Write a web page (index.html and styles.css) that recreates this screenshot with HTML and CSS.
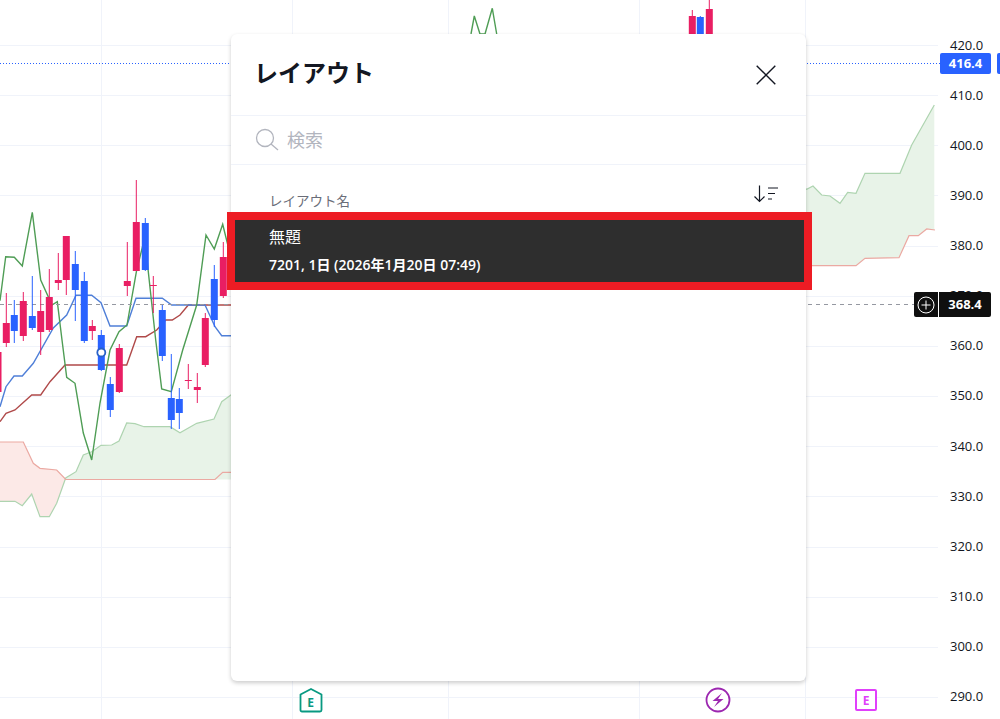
FILE: index.html
```html
<!DOCTYPE html>
<html lang="ja">
<head>
  <meta charset="UTF-8">
  <title>レイアウト</title>
  <link rel="stylesheet" href="styles.css">
</head>
<body>
  <div id="chart">
    <svg id="plot" width="1000" height="719" viewBox="0 0 1000 719">
      <g id="grid"></g>
      <path class="cloud-up" d="M66 478 76 471.7 83.3 455 91.7 451.7 101 445.3 111.7 445 119 441 126.7 423 135 423.7 144 426.7 170 426.7 180 432.7 196.7 423.3 214 419 221.7 401.7 235 392V479.5H66Z"/>
      <path class="cloud-up" d="M800 186 806.7 189.3 813 186 821.7 195 830 196 840 203.3 847.7 192.3 856 193.3 865 173.3 900 173.3 911.7 145 934.3 105V230L926.7 229 918.3 235.7 909 235.7 899 257.7 865 258.3 856 266H800Z"/>
      <path class="cloud-down" d="M0 442H23.3L33.3 463.3 40 468.3 56.7 470 65.7 478.3 56.7 503.3 49.3 516.7H40L31.7 494 22.3 505.7 15 501.3H0Z"/>
      <path class="line-span-a" d="M0 501.3H15L22.3 505.7 31.7 494 40 516.7H49.3L56.7 503.3 65.7 478 76 471.7 83.3 455 91.7 451.7 101 445.3 111.7 445 119 441 126.7 423 135 423.7 144 426.7H170L180 432.7 196.7 423.3 214 419 221.7 401.7 235 392"/>
      <path class="line-span-a" d="M800 186 806.7 189.3 813 186 821.7 195 830 196 840 203.3 847.7 192.3 856 193.3 865 173.3H900L911.7 145 934.3 105"/>
      <path class="line-span-b" d="M0 442H23.3L33.3 463.3 40 468.3 56.7 470 65.7 479.5H215L222.7 472.3H235"/>
      <path class="line-span-b" d="M800 265.7H856L865 258.3 899 257.7 909 235.7H918.3L926.7 229 935 230"/>
      <path class="line-base" d="M0 421.7 6 413.3 15 410 31.7 395H40.7L50 381.7 65 365H126.7L136.7 336.7H145.7L156.7 330 165.7 320H172.3L180 315 188.3 305H235"/>
      <path class="line-conv" d="M0 406.7 6 386.7 14 376H22.3L33.3 363.3 53.3 328 66.7 315 76 295.3H91.7L101 302.7 110 326H126.7L136 298.3H162.3L171.7 305H205L215 326.7 221.7 335.7H235"/>
      <path class="line-lag" d="M0 300.7 5.7 256.7 14.3 257.3 22.3 266 32.3 212.3 40.7 280 52 305 57.3 301.7 62 340 66.7 377.3 75 383.3 83.3 433 91.7 460 100 403 110 350 119 331.7 127 325 136.7 270 145 236.7 148 269 155.7 340 161.7 389 171.3 391.7 182.7 350 196.7 305 206 235 214.3 249 222.7 224.3 232 262"/>
      <path class="line-lag" d="M471 34 474.3 16 480 34H485L492.3 8.3 496.7 34"/>
      <path class="line-last" d="M0 63.5H940"/>
      <path class="line-cross" d="M0 304.5H914"/>
      <g id="candles"></g>
      <circle class="dot" cx="101.3" cy="352.5" r="4"/>
    </svg>

    <div class="axis">
      <span>420.0</span>
      <span>410.0</span>
      <span>400.0</span>
      <span>390.0</span>
      <span>380.0</span>
      <span>370.0</span>
      <span>360.0</span>
      <span>350.0</span>
      <span>340.0</span>
      <span>330.0</span>
      <span>320.0</span>
      <span>310.0</span>
      <span>300.0</span>
      <span>290.0</span>
    </div>

    <div class="tag tag-last">416.4</div>
    <div class="tag-edge"></div>
    <div class="tag tag-cross">
      <span class="tag-plus">
        <svg width="18" height="18" viewBox="0 0 18 18">
          <circle cx="9" cy="9" r="8" fill="none" stroke="#fff"/>
          <path d="M9 4.5v9M4.5 9h9" stroke="#fff"/>
        </svg>
      </span>
      <span class="tag-price">368.4</span>
    </div>

    <div class="pin pin-earn">
      <svg width="24" height="25" viewBox="0 0 24 25">
        <path d="M12 1 22.500 6.500V22a1.500 1.500 0 0 1-1.500 1.500H3A1.500 1.500 0 0 1 1.500 22V6.500Z" fill="#fff" stroke="#089981" stroke-width="1.800" stroke-linejoin="round"/>
      </svg>
      <span>E</span>
    </div>
    <div class="pin pin-news">
      <svg width="26" height="26" viewBox="0 0 26 26">
        <circle cx="13" cy="13" r="11.500" fill="#fff" stroke="#9c27b0" stroke-width="1.800"/>
        <path d="M17 6 7.500 14h5.500L9 20l9.500-8H13Z" fill="#9c27b0"/>
      </svg>
    </div>
    <div class="pin pin-div"><span>E</span></div>
  </div>

  <div class="dialog">
    <div class="dialog-head">
      <h1>レイアウト</h1>
      <svg class="close" width="20" height="20" viewBox="0 0 20 20">
        <path d="M.7.7l18.600 18.600M19.300.7.7 19.300" stroke="#131722" stroke-width="1.400" fill="none"/>
      </svg>
    </div>
    <div class="search">
      <svg width="24" height="24" viewBox="0 0 24 24">
        <circle cx="10" cy="10" r="8.500" fill="none" stroke="#b2b5be" stroke-width="1.300"/>
        <path d="M16 16l7 6" stroke="#b2b5be" stroke-width="1.300" fill="none"/>
      </svg>
      <span>検索</span>
    </div>
    <div class="list-head">
      <span>レイアウト名</span>
      <svg width="26" height="18" viewBox="0 0 26 18">
        <path d="M6.500 .5v16M1.500 11.500l5 5 5-5" fill="none" stroke="#131722" stroke-width="1.200"/>
        <path d="M15 3h10M15 8.500h7M15 14h4" fill="none" stroke="#131722"/>
      </svg>
    </div>
    <div class="row">
      <div class="row-name">無題</div>
      <div class="row-meta">7201, 1日 (2026年1月20日 07:49)</div>
    </div>
  </div>

  <script src="script.js"></script>
</body>
</html>
```

FILE: styles.css
```css
body {
  margin: 0;
  width: 1000px;
  height: 719px;
  overflow: hidden;
  position: relative;
  background: #fff;
  font-family: "Open Sans", "Noto Sans CJK JP", sans-serif;
  color: #131722;
}
#chart {
  width: 1000px;
  height: 719px;
}
#plot {
  display: block;
}
.grid-line {
  stroke: #f0f3fa;
  stroke-width: 1;
}
.cloud-up {
  fill: #e8f3e8;
}
.cloud-down {
  fill: #fce9e7;
}
.line-span-a,
.line-span-b,
.line-base,
.line-conv,
.line-lag,
.line-last,
.line-cross {
  fill: none;
  stroke-width: 1;
}
.line-span-a {
  stroke: #aed4b0;
  stroke-width: 1.200;
}
.line-span-b {
  stroke: #eba9a2;
  stroke-width: 1.200;
}
.line-base {
  stroke: #b04a4a;
  stroke-width: 1.400;
}
.line-conv {
  stroke: #4f7fd8;
  stroke-width: 1.400;
}
.line-lag {
  stroke: #4f9d55;
  stroke-width: 1.400;
}
.line-last {
  stroke: #2962ff;
  stroke-dasharray: 1 2;
}
.line-cross {
  stroke: #9598a1;
  stroke-dasharray: 4 4;
}
.dot {
  fill: #fff;
  stroke: #2962c8;
  stroke-width: 1.800;
}
.axis {
  position: absolute;
  top: 19.500px;
  left: 950px;
  display: flex;
  flex-direction: column;
  font-size: 13px;
  color: #131722;
}
.axis span {
  height: 50.150px;
  line-height: 50.150px;
}
.tag {
  position: absolute;
  border-radius: 2px;
  color: #fff;
  font-size: 13px;
  font-weight: 700;
}
.tag-last {
  left: 940px;
  top: 53px;
  width: 51px;
  height: 21px;
  line-height: 21px;
  text-align: center;
  background: #2962ff;
}
.tag-edge {
  position: absolute;
  left: 997px;
  top: 53px;
  width: 3px;
  height: 21px;
  background: #2962ff;
  border-radius: 2px 0 0 2px;
}
.tag-cross {
  left: 914px;
  top: 292px;
  width: 77px;
  height: 25px;
  display: flex;
  background: #0f0f0f;
}
.tag-plus {
  width: 24px;
  display: flex;
  align-items: center;
  justify-content: center;
  border-right: 1px solid #fff;
}
.tag-price {
  flex: 1;
  line-height: 25px;
  text-align: center;
}
.pin {
  position: absolute;
  display: flex;
  align-items: center;
  justify-content: center;
  font-size: 12px;
  font-weight: 700;
}
.pin svg {
  display: block;
}
.pin span {
  position: absolute;
}
.pin-earn {
  left: 298.500px;
  top: 687.500px;
  color: #089981;
}
.pin-earn span {
  top: 6px;
}
.pin-news {
  left: 705px;
  top: 687px;
}
.pin-div {
  left: 855px;
  top: 689px;
  width: 18px;
  height: 18px;
  border: 2px solid #e040fb;
  border-radius: 2px;
  background: #fff;
  color: #e040fb;
}
.dialog {
  position: absolute;
  left: 231px;
  top: 34px;
  width: 575px;
  height: 647px;
  display: flex;
  flex-direction: column;
  background: #fff;
  border-radius: 6px;
  box-shadow: 0 2px 4px rgba(0, 0, 0, 0.2);
  font-family: "Noto Sans CJK JP", sans-serif;
}
.dialog-head {
  height: 81px;
  padding: 0 30px 0 23px;
  display: flex;
  align-items: center;
  justify-content: space-between;
  border-bottom: 1px solid #f0f3fa;
  flex: none;
}
.dialog-head h1 {
  margin: 0 0 6px;
  font-size: 24px;
  font-weight: 700;
  line-height: 32px;
}
.search {
  height: 48px;
  padding-left: 24px;
  display: flex;
  align-items: center;
  gap: 8px;
  border-bottom: 1px solid #f0f3fa;
  flex: none;
  color: #b2b5be;
  font-size: 18px;
  line-height: 24px;
}
.search span {
  margin-bottom: 2px;
}
.list-head {
  height: 47px;
  padding: 0 27px 0 38px;
  display: flex;
  align-items: flex-end;
  justify-content: space-between;
  flex: none;
  color: #6a6d78;
  font-size: 13.500px;
  line-height: 20px;
}
.list-head span {
  margin-bottom: 2px;
}
.list-head svg {
  margin-bottom: 9px;
}
.row {
  height: 57px;
  margin: 8px 2px 0 4px;
  padding: 5px 0 0 34px;
  background: #2e2e2e;
  outline: 8px solid #ed1c24;
  color: #fff;
}
.row-name {
  font-size: 16px;
  line-height: 22px;
}
.row-meta {
  margin-top: 8px;
  font-family: "Open Sans", "Noto Sans CJK JP", sans-serif;
  font-size: 14px;
  font-weight: 600;
  line-height: 20px;
}
```

FILE: script.js
```js
// x, color, wick top, body top, body bottom, wick bottom
const candles = [
  [-2, 'p', 345, 352, 392, 394],
  [6.3, 'p', 293, 323, 343, 347],
  [14.3, 'b', 300, 315, 331, 343],
  [23.3, 'p', 292, 301, 336, 341],
  [32.3, 'b', 276, 316, 328, 330],
  [40.7, 'p', 290, 311, 332, 355],
  [49.3, 'p', 269, 297, 330, 332],
  [58.3, 'p', 253, 280, 283, 290],
  [66.3, 'p', 236, 236, 280, 295],
  [75.3, 'b', 251, 264, 290, 321],
  [84.3, 'b', 272, 281, 341, 343],
  [92.3, 'p', 320, 326, 331, 340],
  [101.3, 'b', 330, 335, 370, 371],
  [110.3, 'b', 377, 384, 410, 417],
  [119.3, 'p', 344, 348, 392, 393],
  [127.3, 'p', 242, 281, 286, 296],
  [136.3, 'p', 180, 222, 271, 271],
  [145.3, 'b', 218, 223, 270, 271],
  [153.3, 'p', 276, 285, 286, 313],
  [162.3, 'b', 305, 310, 356, 361],
  [171.3, 'b', 354, 398, 420, 429],
  [179.3, 'b', 388, 399, 413, 429],
  [188.3, 'p', 364, 380, 381, 389],
  [197.3, 'p', 373, 387, 390, 403],
  [205.3, 'p', 313, 318, 365, 367],
  [214.3, 'b', 265, 279, 320, 327],
  [223.3, 'p', 242, 257, 296, 298],
  [692.3, 'p', 10, 16, 34, 34],
  [700.3, 'b', 16, 17, 34, 34],
  [709.3, 'p', 0, 9, 34, 34],
];
const colors = { p: '#e91e63', b: '#2962ff' };
const NS = 'http://www.w3.org/2000/svg';

function add(parent, tag, attrs) {
  const el = document.createElementNS(NS, tag);
  for (const key in attrs) el.setAttribute(key, attrs[key]);
  parent.appendChild(el);
}

const grid = document.getElementById('grid');
for (let i = 0; i < 14; i++) {
  const y = Math.round(45 + i * 50.15) + 0.5;
  add(grid, 'line', { class: 'grid-line', x1: 0, x2: 938, y1: y, y2: y });
}
[101.5, 292.5, 448.5, 639.5, 805.5].forEach(x => {
  add(grid, 'line', { class: 'grid-line', x1: x, x2: x, y1: 0, y2: 719 });
});

const group = document.getElementById('candles');
candles.forEach(([x, c, wt, bt, bb, wb]) => {
  add(group, 'line', { x1: x, x2: x, y1: wt, y2: wb, stroke: colors[c], 'stroke-width': 1 });
  add(group, 'rect', { x: x - 3.5, y: bt, width: 7, height: Math.max(bb - bt, 1), fill: colors[c] });
});
```
